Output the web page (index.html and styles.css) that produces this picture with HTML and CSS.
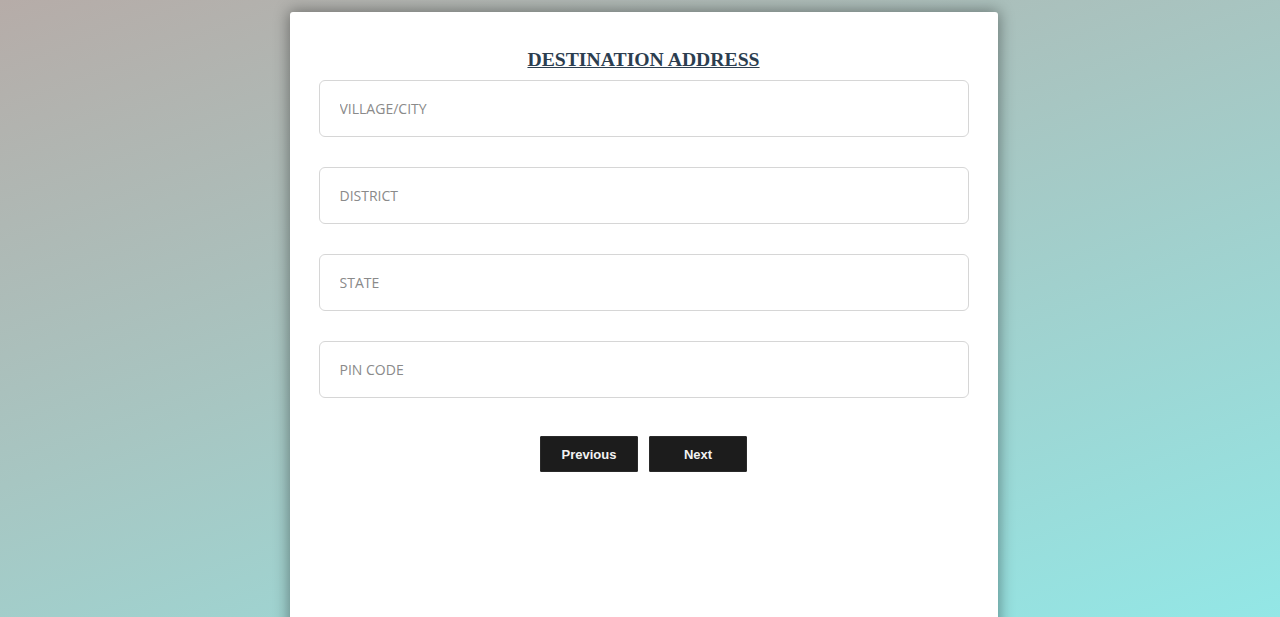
FILE: index.html
```html
<!DOCTYPE html>
<html>
<head>
<meta charset="utf-8">
<link rel="stylesheet" href="styles.css">
</head>
<body>
<div class="page">
  <form class="card">
    <h2 class="title">DESTINATION ADDRESS</h2>
    <input class="field" type="text" placeholder="VILLAGE/CITY">
    <input class="field" type="text" placeholder="DISTRICT">
    <input class="field" type="text" placeholder="STATE">
    <input class="field" type="text" placeholder="PIN CODE">
    <div class="actions">
      <button type="button" class="btn">Previous</button>
      <button type="button" class="btn">Next</button>
    </div>
  </form>
</div>
</body>
</html>
```

FILE: styles.css
```css
html, body {
  margin: 0;
  height: 100%;
  overflow: hidden;
}
body {
  background: linear-gradient(160deg, #b6aca8 0%, #a7c6c2 45%, #93e7e6 100%);
  font-family: "Open Sans", "Liberation Sans", sans-serif;
}
.page {
  display: flex;
  justify-content: center;
  padding: 12px 0 0 7px;
}
.card {
  width: 650px;
  min-height: 640px;
  background: #fff;
  border-radius: 3px;
  padding: 35px 29px 0 29px;
  box-shadow: 0 0 15px 1px rgba(0, 0, 0, 0.4);
  display: flex;
  flex-direction: column;
}
.title {
  margin: 0 0 9px 0;
  text-align: center;
  font-family: "Liberation Serif", "Times New Roman", serif;
  font-weight: bold;
  font-size: 19.7px;
  line-height: 24px;
  color: #2c3e50;
  text-decoration: underline;
}
.field {
  box-sizing: border-box;
  width: 650px;
  height: 57px;
  margin: 0 0 30px 0;
  padding: 0 20px;
  border: 1px solid #d6d6d6;
  border-radius: 6px;
  font-family: "Open Sans", "Liberation Sans", sans-serif;
  font-size: 14px;
  color: #2c3e50;
  outline: none;
}
.field::placeholder {
  color: #8a8a8a;
}
.actions {
  display: flex;
  justify-content: center;
  gap: 11px;
  margin-top: 8px;
}
.btn {
  width: 98px;
  height: 36px;
  border: 1px solid #2a2a2a;
  border-radius: 1px;
  background: #1c1c1c;
  color: #f2f2f2;
  font-family: "Liberation Sans", Arial, sans-serif;
  font-weight: bold;
  font-size: 13px;
  padding: 0;
  cursor: pointer;
}
```
